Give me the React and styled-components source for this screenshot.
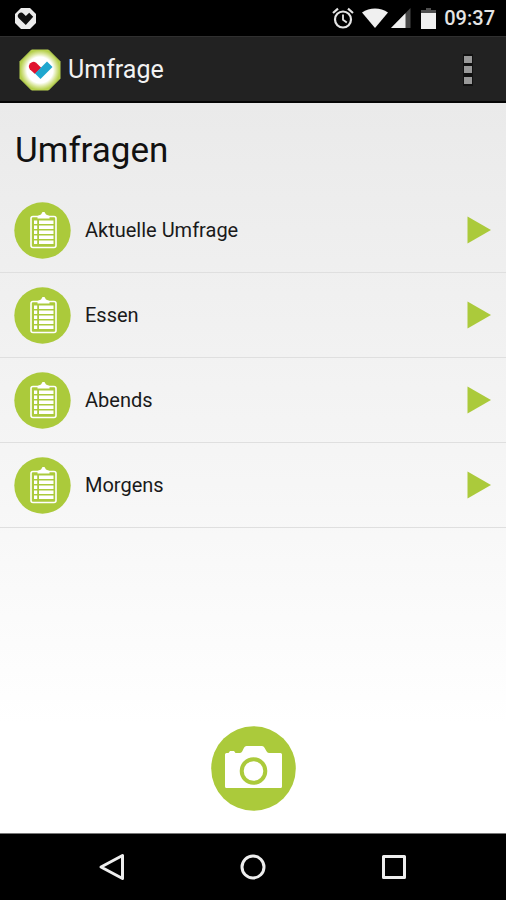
import styled, { createGlobalStyle } from 'styled-components';

const GlobalStyle = createGlobalStyle`
    * {
        box-sizing: border-box;
    }
    body {
        margin: 0;
        font-family: Roboto, "Liberation Sans", sans-serif;
        background: #000;
    }
    button {
        padding: 0;
        border: 0;
        background: none;
        font: inherit;
        color: inherit;
        cursor: pointer;
    }
    svg {
        display: block;
    }
`;

const Screen = styled.div`
    min-height: 100vh;
    display: flex;
    flex-direction: column;
`;

const StatusBar = styled.div`
    height: 36px;
    padding: 0 11px 0 14px;
    display: flex;
    align-items: center;
    justify-content: space-between;
    background: #000;
`;

const StatusIcons = styled.div`
    display: flex;
    align-items: center;
    gap: ${({ $gap }) => $gap}px;
`;

const Clock = styled.span`
    font-size: 20px;
    line-height: 24px;
    font-weight: 500;
    color: #e4e4e4;
`;

const AppBar = styled.header`
    height: 67px;
    padding: 1px 16px 0 19px;
    display: flex;
    align-items: center;
    gap: 7px;
    background: #222;
    border-top: 1px solid #303030;
    border-bottom: 2px solid #050505;
`;

const AppTitle = styled.span`
    flex: 1;
    font-size: 25px;
    line-height: 32px;
    color: #f2f2f2;
`;

const MenuButton = styled.button`
    width: 44px;
    height: 48px;
    display: flex;
    align-items: center;
    justify-content: center;
`;

const Content = styled.main`
    flex: 1;
    display: flex;
    flex-direction: column;
    background: linear-gradient(#eaeaea, #f6f6f6 52%, #fff 85%);
`;

const Heading = styled.h1`
    margin: 0;
    padding: 26px 15px 15px;
    font-size: 35px;
    line-height: 44px;
    font-weight: 400;
    color: #111;
`;

const SurveyList = styled.ul`
    margin: 0;
    padding: 0;
    list-style: none;
`;

const SurveyItem = styled.li`
    border-bottom: 1px solid #dfdfdf;
`;

const SurveyButton = styled.button`
    width: 100%;
    height: 84px;
    padding: 0 15px 0 14px;
    display: flex;
    align-items: center;
    gap: 14px;
    text-align: left;
`;

const SurveyName = styled.span`
    flex: 1;
    font-size: 20px;
    line-height: 24px;
    color: #1a1a1a;
`;

const CameraArea = styled.div`
    margin-top: auto;
    padding: 24px 0 22px;
    display: flex;
    justify-content: center;
`;

const NavBar = styled.nav`
    height: 67px;
    display: flex;
    justify-content: center;
    background: #000;
    border-top: 1px solid #777;
`;

const NavButton = styled.button`
    flex: 0 1 141px;
    display: flex;
    align-items: center;
    justify-content: center;
`;

const GREEN = '#abca3b';
const OCTAGON = 'M12.5 1h17L41 12.5v17L29.5 41h-17L1 29.5v-17z';

const HeartBadge = () => (
    <svg width="23" height="23" viewBox="0 0 23 23" aria-hidden="true">
        <path d="M7 1h9l6 6v9l-6 6H7l-6-6V7z" fill="#ececec" />
        <path d="M4.800 11.200a3.200 3.200 0 0 1 4.700-4.500l2.300 2.300 3.400-3.300 4 4-7.400 8.300z" fill="#111" />
    </svg>
);

const AlarmIcon = () => (
    <svg width="22" height="22" viewBox="0 0 22 22" fill="none" stroke="#e4e4e4" aria-hidden="true">
        <circle cx="11" cy="12.5" r="8" strokeWidth="2.2" />
        <path d="M11 7.5v5.3l3.8 2.6" strokeWidth="1.8" />
        <path d="M1 6l5-4.3M21 6l-5-4.3" strokeWidth="2.2" />
    </svg>
);

const WifiIcon = () => (
    <svg width="26" height="20" viewBox="0 0 26 20" aria-hidden="true">
        <path d="M0 4.500C7.500-1 18.500-1 26 4.500L13 20z" fill="#f0f0f0" />
    </svg>
);

const SignalIcon = () => (
    <svg width="22" height="20" viewBox="0 0 22 20" aria-hidden="true">
        <path d="M19.500 0v20H0z" fill="#484848" />
        <path d="M14.500 5.200V20H0z" fill="#f0f0f0" />
    </svg>
);

const BatteryIcon = () => (
    <svg width="15" height="21" viewBox="0 0 15 21" aria-hidden="true">
        <path d="M5 0h5v2h5v4H0V2h5z" fill="#505050" />
        <path d="M0 5h15v16H0z" fill="#f0f0f0" />
    </svg>
);

const Logo = () => (
    <svg width="42" height="42" viewBox="0 0 42 42" aria-hidden="true">
        <defs>
            <radialGradient id="glow">
                <stop offset="0.65" stopColor="#fff" />
                <stop offset="0.85" stopColor="#d5e391" />
                <stop offset="1" stopColor="#b4cf4b" />
            </radialGradient>
        </defs>
        <path d={OCTAGON} fill="url(#glow)" stroke="#b9d253" />
        <path d="M10.800 20.200a4.600 4.600 0 0 1 6.400-6.400l5 5L16 25z" fill="#e0122f" />
        <path d="M28 12.500l5.500 5.500L21.500 30 16 24.500z" fill="#1ea6cf" />
    </svg>
);

const MoreIcon = () => (
    <svg width="12" height="32" viewBox="0 0 12 32" aria-hidden="true">
        <path d="M1 0h10v32H1z" fill="#111" />
        <path d="M2 2h8v7H2zM2 12h8v7H2zM2 23h8v7H2z" fill="#999" />
    </svg>
);

const ClipboardIcon = () => (
    <svg width="57" height="57" viewBox="0 0 57 57" aria-hidden="true">
        <circle cx="28.500" cy="28.500" r="28.200" fill={GREEN} />
        <rect x="17" y="14.500" width="25" height="31" rx="2" fill="none" stroke="#fff" strokeWidth="1.600" />
        <path d="M23.500 16.500v-2.500l3.500-1.500 1.500-2.500h2l1.500 2.500 3.500 1.500v2.500z" fill="#fff" />
        {[18.5, 23.5, 28.5, 33.5, 38.5].map((y) => (
            <path key={y} d={`M20 ${y}h3.200v3.600H20zM25 ${y}h14.500v3.600H25z`} fill="#fff" />
        ))}
    </svg>
);

const ArrowIcon = () => (
    <svg width="24" height="28" viewBox="0 0 24 28" aria-hidden="true">
        <path d="M0.500 0.500L24 14 0.500 27.500z" fill={GREEN} />
    </svg>
);

const CameraIcon = () => (
    <svg width="85" height="85" viewBox="0 0 85 85" aria-hidden="true">
        <circle cx="42.500" cy="42.500" r="42.300" fill={GREEN} />
        <path
            d="M15.500 27h2l1.500-2h4l1.500 2h4.500q1.500 0 2.300-1.800l1.700-3.500q.8-1.700 2.500-1.700h15.500q1.700 0 2.500 1.700l2 3.500q.8 1.800 2.500 1.800h11.500a1.500 1.500 0 0 1 1.500 1.500v32a1.500 1.500 0 0 1-1.500 1.500h-54a1.500 1.500 0 0 1-1.500-1.500v-32a1.500 1.500 0 0 1 1.500-1.500z"
            fill="#fff"
        />
        <circle cx="42.500" cy="45" r="11.800" fill="none" stroke={GREEN} strokeWidth="4" />
    </svg>
);

const NavIcon = ({ children }) => (
    <svg width="28" height="28" viewBox="0 0 28 28" fill="none" stroke="#eee" strokeWidth="3" strokeLinejoin="round" aria-hidden="true">
        {children}
    </svg>
);

const surveys = ['Aktuelle Umfrage', 'Essen', 'Abends', 'Morgens'];

const App = () => {
    return (
        <>
            <GlobalStyle />
            <Screen>
                <StatusBar>
                    <HeartBadge />
                    <StatusIcons $gap={8}>
                        <AlarmIcon />
                        <StatusIcons $gap={3}>
                            <WifiIcon />
                            <SignalIcon />
                        </StatusIcons>
                        <BatteryIcon />
                        <Clock>09:37</Clock>
                    </StatusIcons>
                </StatusBar>
                <AppBar>
                    <Logo />
                    <AppTitle>Umfrage</AppTitle>
                    <MenuButton aria-label="Menü">
                        <MoreIcon />
                    </MenuButton>
                </AppBar>
                <Content>
                    <Heading>Umfragen</Heading>
                    <SurveyList>
                        {surveys.map((name) => (
                            <SurveyItem key={name}>
                                <SurveyButton>
                                    <ClipboardIcon />
                                    <SurveyName>{name}</SurveyName>
                                    <ArrowIcon />
                                </SurveyButton>
                            </SurveyItem>
                        ))}
                    </SurveyList>
                    <CameraArea>
                        <button aria-label="Kamera">
                            <CameraIcon />
                        </button>
                    </CameraArea>
                </Content>
                <NavBar>
                    <NavButton aria-label="Zurück">
                        <NavIcon>
                            <path d="M24.500 2.500v23L3 14z" />
                        </NavIcon>
                    </NavButton>
                    <NavButton aria-label="Startseite">
                        <NavIcon>
                            <circle cx="14" cy="14" r="11" />
                        </NavIcon>
                    </NavButton>
                    <NavButton aria-label="Übersicht">
                        <NavIcon>
                            <rect x="3.500" y="3.500" width="21" height="21" />
                        </NavIcon>
                    </NavButton>
                </NavBar>
            </Screen>
        </>
    );
};

export default App;
